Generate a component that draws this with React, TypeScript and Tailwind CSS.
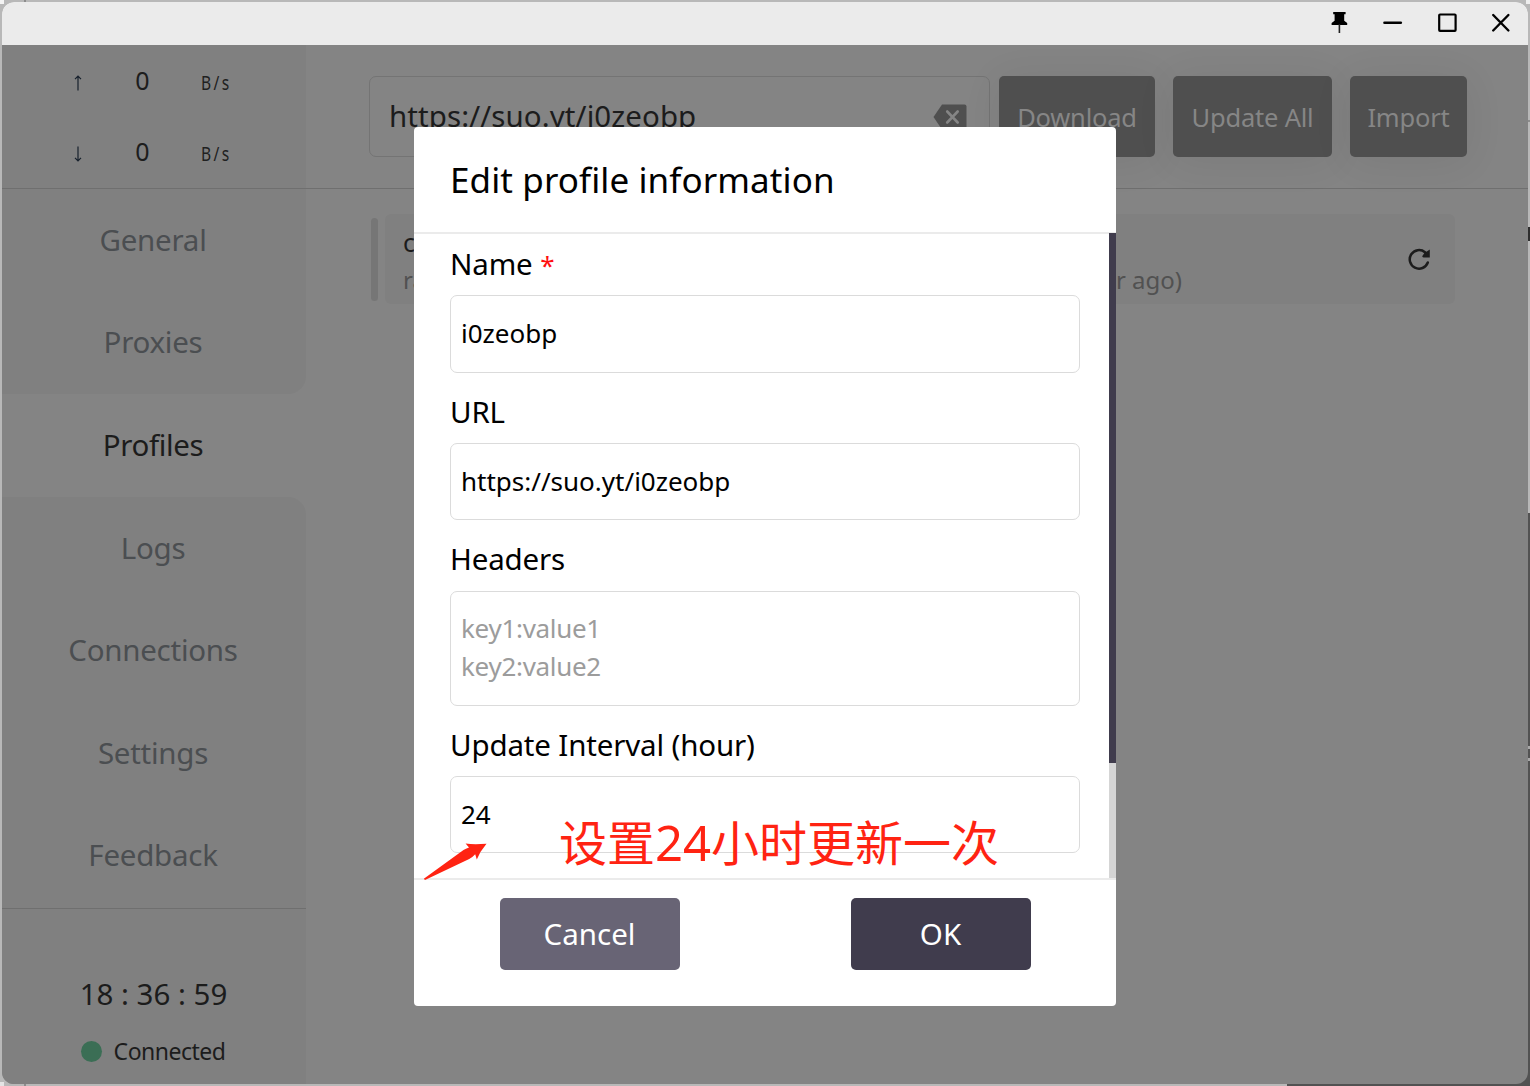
import type { ReactNode } from "react";

const menuTop = ["General", "Proxies"];
const menuBottom = ["Logs", "Connections", "Settings", "Feedback"];

function ArrowIcon({ down }: { down?: boolean }) {
  return (
    <svg
      width="8"
      height="16"
      viewBox="0 0 8 16"
      fill="none"
      stroke="#16202c"
      strokeWidth="1.2"
      className={down ? "rotate-180" : ""}
    >
      <path d="M4 15.5V1.200M1 4.200L4 1.200L7 4.200" />
    </svg>
  );
}

function TrafficRow({ down }: { down?: boolean }) {
  return (
    <div className="flex h-[71px] items-center">
      <div className="ml-[72px] w-[8px] pt-[4px]">
        <ArrowIcon down={down} />
      </div>
      <div className="w-[119px] pb-[2px] pl-[2px] text-center text-[25px] leading-[30px] text-[#1d1d1d]">0</div>
      <div className="origin-left scale-x-[0.82] pt-[4px] text-[19px] leading-[24px] tracking-[3px] text-[#202020]">
        B/s
      </div>
    </div>
  );
}

function TitleBar() {
  return (
    <div className="flex h-[43px] shrink-0 items-center justify-end bg-[#ebebeb] pr-[12px]">
      <svg width="190" height="43" viewBox="0 0 190 43" fill="none">
        <path d="M7.2 10h12.4v2.2h-1.4v6.6l3 2.3v1.8H5.6v-1.8l3-2.3v-6.6H7.2z" fill="#000" />
        <path d="M13.4 22v9" stroke="#222" strokeWidth="1.6" />
        <path d="M58.5 20.7h16.3" stroke="#000" strokeWidth="2.6" strokeLinecap="round" />
        <rect x="113.2" y="12.5" width="16.4" height="16.4" rx="0.8" stroke="#000" strokeWidth="2.2" />
        <path d="M167.2 13l15.2 15.5M182.4 13l-15.2 15.5" stroke="#000" strokeWidth="2.4" strokeLinecap="round" />
      </svg>
    </div>
  );
}

function MenuItem({ children }: { children: ReactNode }) {
  return (
    <div className="flex flex-1 items-center justify-center pr-[2px] text-[29.5px] leading-[40px] tracking-[-0.25px] text-[#4b4e51]">
      {children}
    </div>
  );
}

function Sidebar() {
  return (
    <div className="flex w-[304px] shrink-0 flex-col">
      <div className="h-[144px] border-b border-[#6f6f6f] bg-[#808080]">
        <TrafficRow />
        <TrafficRow down />
      </div>
      <div className="flex h-[205px] flex-col rounded-br-[18px] bg-[#808080] pb-[1px]">
        {menuTop.map((m) => (
          <MenuItem key={m}>{m}</MenuItem>
        ))}
      </div>
      <div className="flex h-[103px] items-center justify-center pb-[2px] pr-[2px] text-[29.5px] leading-[40px] tracking-[-0.35px] text-[#1c1c1c]">
        Profiles
      </div>
      <div className="flex h-[412px] flex-col rounded-tr-[18px] border-b border-[#6f6f6f] bg-[#808080] pb-[2px]">
        {menuBottom.map((m) => (
          <MenuItem key={m}>{m}</MenuItem>
        ))}
      </div>
      <div className="flex flex-1 flex-col items-center bg-[#808080] pt-[63px] text-[#1c1c1c]">
        <div className="pr-[1px] text-[29.5px] leading-[44px]">18 : 36 : 59</div>
        <div className="mt-[18px] flex items-center gap-[12px] pr-[2px] text-[23px] leading-[34px] tracking-[-0.5px]">
          <span className="size-[21px] rounded-full bg-[#3b6e55]" />
          Connected
        </div>
      </div>
    </div>
  );
}

function ToolButton({ children, className }: { children: ReactNode; className: string }) {
  return (
    <div
      className={`flex h-[81px] items-center justify-center rounded-[5px] bg-[#4f4f4f] text-[25.5px] leading-[36px] tracking-[-0.2px] text-[#868686] shadow-[0_4px_40px_rgba(0,0,0,0.07)] ${className}`}
    >
      {children}
    </div>
  );
}

function Main() {
  return (
    <div className="flex flex-1 flex-col">
      <div className="flex h-[144px] border-b border-[#6f6f6f] pl-[63px] pt-[31px]">
        <div className="flex h-[81px] w-[621px] items-center justify-between rounded-[7px] border border-[#747474] pl-[19px] pr-[22px]">
          <span className="pb-[2px] text-[29.5px] leading-[40px] tracking-[0.08px] text-[#1c1c1c]">
            https://suo.yt/i0zeobp
          </span>
          <svg width="34" height="26" viewBox="0 0 34 26">
            <path d="M9 0.5h22.500a2 2 0 0 1 2 2v21a2 2 0 0 1-2 2H9L0.500 13z" fill="#4f4f4f" />
            <path
              d="M14.200 7.500l10.500 11M24.700 7.500l-10.500 11"
              stroke="#858585"
              strokeWidth="2.600"
              strokeLinecap="round"
            />
          </svg>
        </div>
        <ToolButton className="ml-[9px] w-[156px]">Download</ToolButton>
        <ToolButton className="ml-[18px] w-[159px]">Update All</ToolButton>
        <ToolButton className="ml-[18px] w-[117px]">Import</ToolButton>
      </div>
      <div className="flex items-center gap-[7px] pl-[65px] pt-[25px]">
        <div className="h-[83px] w-[7px] rounded-[4px] bg-[#767676]" />
        <div className="flex h-[90px] w-[1070px] items-center justify-between rounded-[6px] bg-[#808080] pl-[18px] pr-[24px]">
          <div className="flex flex-col pt-[5px]">
            <span className="text-[25px] leading-[36px] text-[#1c1c1c]">c</span>
            <div className="flex w-[779px] justify-between text-[24px] leading-[40px] text-[#515151]">
              <span>ra</span>
              <span>(1 hour ago)</span>
            </div>
          </div>
          <svg width="24" height="24" viewBox="0 0 24 24" fill="none">
            <path
              d="M20.800 15.500A9.300 9.300 0 1 1 18 5.200l2 1.800"
              stroke="#1c1c1c"
              strokeWidth="2.500"
              strokeLinecap="round"
            />
            <path d="M22.800 2.500v8h-6.300q-2-.6-.8-2l1.500-2.300z" fill="#1c1c1c" />
          </svg>
        </div>
      </div>
    </div>
  );
}

function Label({ children, className = "" }: { children: ReactNode; className?: string }) {
  return (
    <div className={`h-[40px] text-[29.5px] leading-[40px] tracking-[-0.15px] text-black ${className}`}>
      {children}
    </div>
  );
}

function Field({ children, className = "" }: { children: ReactNode; className?: string }) {
  return (
    <div
      className={`flex w-[630px] flex-col justify-center rounded-[7px] border border-[#dbdbdb] pb-[2px] pl-[10px] text-[26px] leading-[38px] ${className}`}
    >
      {children}
    </div>
  );
}

function Modal() {
  return (
    <div className="absolute left-[414px] top-[127px] flex h-[879px] w-[702px] flex-col overflow-hidden rounded-[4px] bg-white">
      <div className="h-[105px] pl-[36px] pt-[28px] text-[35px] leading-[50px] tracking-[0.1px] text-black">
        Edit profile information
      </div>
      <div className="h-[2px] bg-[#ebebeb]" />
      <div className="flex h-[644px] justify-between">
        <div className="pl-[36px] pt-[10px]">
          <Label>
            Name <span className="text-[26px] leading-none text-[#ff0f0f]">*</span>
          </Label>
          <Field className="mt-[11px] h-[78px] text-black">i0zeobp</Field>
          <Label className="mt-[19px]">URL</Label>
          <Field className="mt-[11px] h-[77px] text-black">https://suo.yt/i0zeobp</Field>
          <Label className="mt-[19px]">Headers</Label>
          <Field className="mt-[12px] h-[115px] tracking-[-0.3px] text-[#9c9c9c]">
            <span className="-mt-[2px]">key1:value1</span>
            <span>key2:value2</span>
          </Field>
          <Label className="mt-[19px]">Update Interval (hour)</Label>
          <Field className="mt-[11px] h-[77px] text-black">24</Field>
        </div>
        <div className="-mt-[1px] w-[7px] bg-[#d5d5d5]">
          <div className="h-[530px] bg-[#403c4d]" />
        </div>
      </div>
      <div className="h-[2px] bg-[#ebebeb]" />
      <div className="flex gap-[171px] pl-[86px] pt-[18px] text-[29.5px] leading-[40px] text-white">
        <div className="flex h-[72px] w-[180px] items-center justify-center rounded-[5px] bg-[#686475] pr-[1px]">
          Cancel
        </div>
        <div className="flex h-[72px] w-[180px] items-center justify-center rounded-[5px] bg-[#403c4d] pr-[1px]">
          OK
        </div>
      </div>
    </div>
  );
}

function Annotation() {
  return (
    <>
      <svg className="absolute left-[420px] top-[838px]" width="72" height="44" viewBox="0 0 72 44">
        <path
          d="M3.800 40.800L43.500 12q2.200-1.500 5.500-2.600L45.600 5.600q8 1.200 20.900.2Q60 13.500 56.800 21.500l-1.600-5.200q-2.200 2.600-6 4.700L5 42z"
          fill="#ff2312"
        />
      </svg>
      <div className="absolute left-[559px] top-[807px] whitespace-nowrap text-[48px] leading-[70px] text-[#ff2312]">
        设置<span className="text-[49px]">24</span>小时更新一次
      </div>
    </>
  );
}

function Backdrop() {
  return (
    <>
      <div className="absolute bottom-0 right-0 h-[573px] w-[243px] bg-[#525252]" />
      <div className="absolute left-0 top-0 size-[4px] bg-[#f4f4f4]" />
      <div className="absolute right-0 top-0 size-[4px] bg-[#eeeeee]" />
      <div className="absolute bottom-0 left-0 size-[4px] bg-[#e4e4e4]" />
      <div className="absolute left-[24px] top-0 h-full w-[2px] bg-[#8c8c8c]" />
      <div className="absolute right-0 top-[120px] h-[2px] w-[2px] bg-[#8c8c8c]" />
      <div className="absolute right-0 top-[227px] h-[14px] w-[2px] bg-[#2e2e2e]" />
      <div className="absolute right-0 top-[746px] h-[3px] w-[2px] bg-[#a8a8a8]" />
      <div className="absolute right-0 top-[758px] h-[3px] w-[2px] bg-[#a8a8a8]" />
    </>
  );
}

export default function App() {
  return (
    <div className="relative h-[1086px] w-[1530px] overflow-hidden whitespace-nowrap bg-[#b8b8b8] p-[2px] font-['Noto_Sans','Noto_Sans_CJK_SC',sans-serif]">
      <Backdrop />
      <div className="relative flex h-[1082px] w-[1526px] flex-col overflow-hidden rounded-[12px] bg-[#848484]">
        <TitleBar />
        <div className="flex flex-1">
          <Sidebar />
          <Main />
        </div>
      </div>
      <Modal />
      <Annotation />
    </div>
  );
}
